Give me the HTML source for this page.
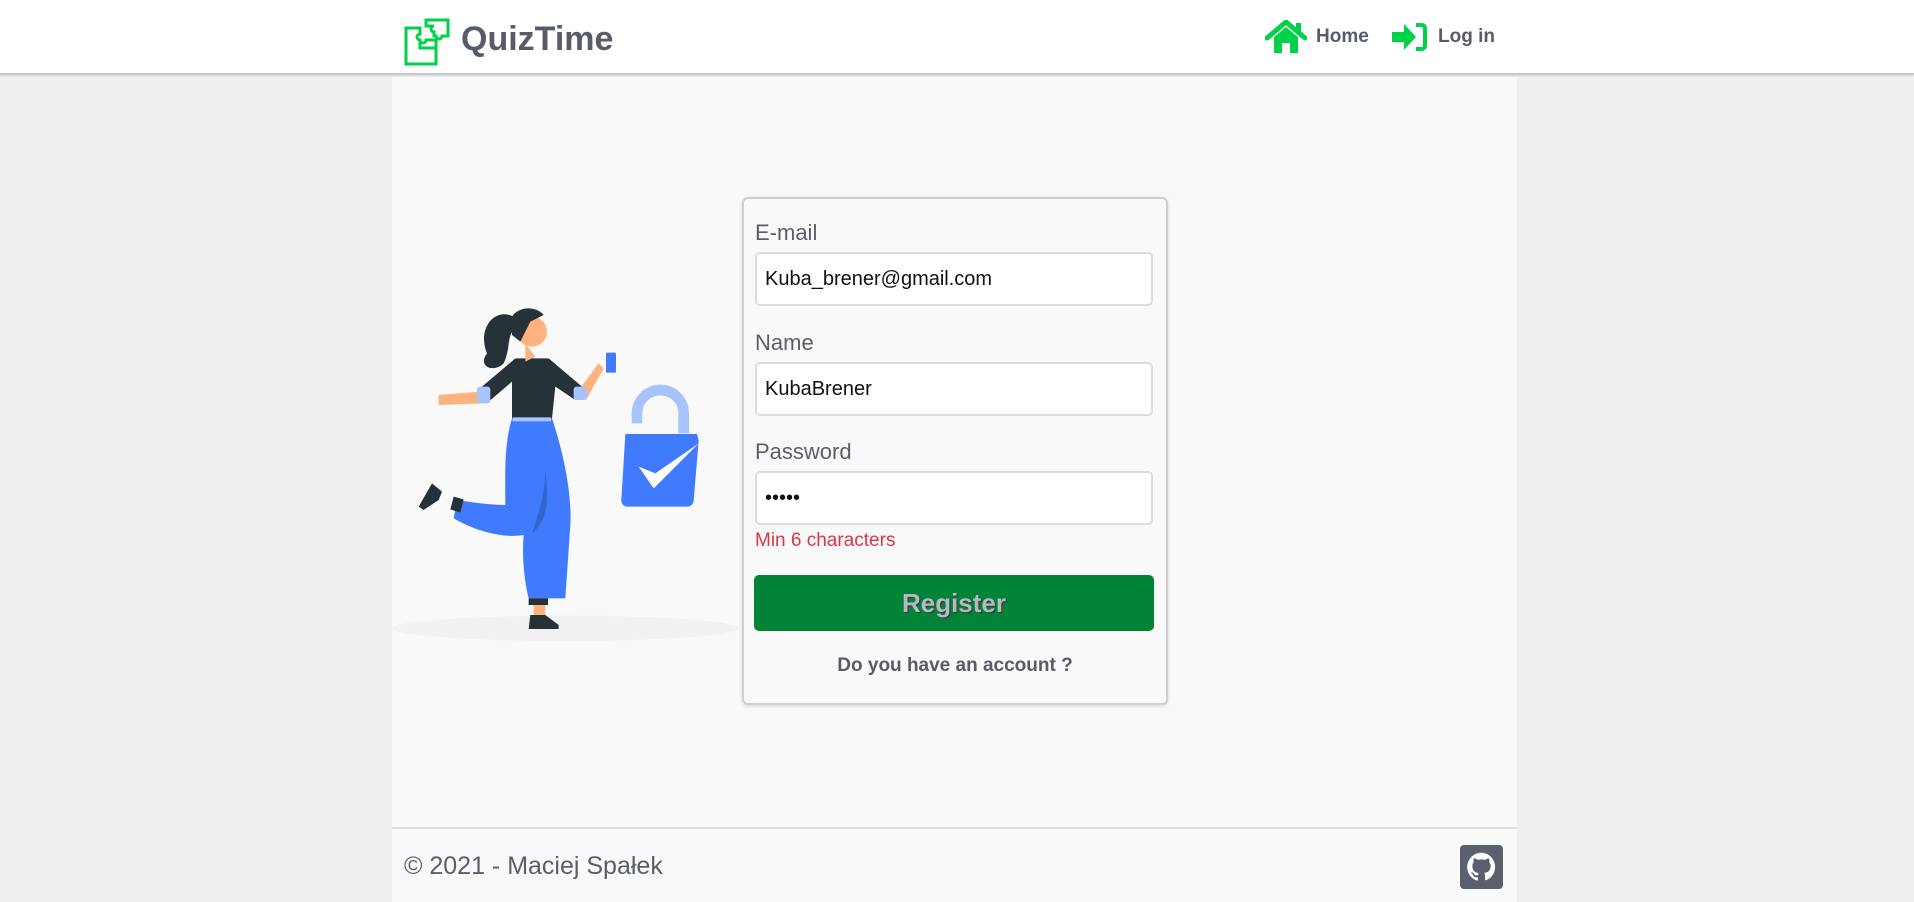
<!DOCTYPE html>
<html><head><meta charset="utf-8"><style>
*{box-sizing:border-box;margin:0;padding:0}
body{width:1914px;height:902px;background:#efefef;font-family:"Liberation Sans",Arial,sans-serif;position:relative;overflow:hidden}
.hdr{position:absolute;left:0;top:0;width:1914px;height:75px;background:#fff;border-bottom:2px solid #c8c8cc;box-shadow:0 1px 2px rgba(0,0,0,.1)}
.main{position:absolute;left:392px;top:77px;width:1125px;height:825px;background:#f9f9f9}
.logo{position:absolute;left:404px;top:16px}
.brand{position:absolute;left:461px;top:20px;font-size:34px;font-weight:bold;color:#575b6a}
.nav{position:absolute;top:26px;font-size:19px;font-weight:bold;color:#575b6a}
.card{position:absolute;left:742px;top:197px;width:426px;height:508px;border:2px solid #d0d0d4;border-radius:6px;background:#f9f9f9;box-shadow:0 1px 3px rgba(0,0,0,.15)}
.lbl{position:absolute;left:755px;font-size:22px;color:#5a5e6c}
.inp{position:absolute;left:755px;width:398px;height:54px;border:2px solid #dcdcdc;border-radius:5px;background:#fff;font-size:20px;color:#111;padding:14px 0 0 8px}
.err{position:absolute;left:755px;top:530px;font-size:19px;color:#dc3545}
.btn{position:absolute;left:754px;top:575px;width:400px;height:56px;background:#018437;border-radius:5px;text-align:center;font-size:26px;font-weight:bold;color:#b6b8c4;line-height:56px;text-shadow:1px 1px 1px #333}
.acc{position:absolute;left:742px;width:426px;top:655px;text-align:center;font-size:19px;font-weight:bold;color:#575b6a}
.fline{position:absolute;left:392px;top:827px;width:1125px;height:2px;background:#dedede}
.foot{position:absolute;left:404px;top:852px;font-size:25px;color:#5a5e6c}
.gh{position:absolute;left:1460px;top:845px;width:43px;height:44px;background:#5b6070;border-radius:4px}
</style></head><body>
<div class="hdr"></div>
<div class="main"></div>
<svg class="logo" width="50" height="50" viewBox="0 0 50 50" fill="none" stroke="#00d04a" stroke-width="3">
<path d="M2 12h14v6a3 3 0 1 0 0 6v8h16v16H2z"/>
<path d="M16 24a3 3 0 1 0 6 0h10v8"/>
<path d="M22 4h22v16h-6a3 3 0 1 1-6 0h-2v-4a3 3 0 1 1 0-6h-8z"/>
</svg>
<div class="brand">QuizTime</div>
<svg style="position:absolute;left:1265px;top:20px" width="42" height="34" viewBox="0 0 42 34"><path d="M2 18L21 2l19 16" stroke="#00d04a" stroke-width="5" fill="none" stroke-linecap="round"/><path d="M9 17l12-10 12 10v16h-8v-10h-8v10H9z" fill="#00d04a"/><rect x="31" y="3" width="5" height="9" fill="#00d04a"/></svg>
<div class="nav" style="left:1316px">Home</div>
<svg style="position:absolute;left:1390px;top:22px" width="38" height="30" viewBox="0 0 38 30"><path d="M2 10h12V2l12 13-12 13v-8H2z" fill="#00d04a"/><path d="M26 3h6a3 3 0 0 1 3 3v18a3 3 0 0 1-3 3h-6" stroke="#00d04a" stroke-width="4" fill="none"/></svg>
<div class="nav" style="left:1438px">Log in</div>

<svg style="position:absolute;left:392px;top:290px" width="350" height="360" viewBox="0 0 1050 1080">
<ellipse cx="520" cy="1015" rx="520" ry="38" fill="#f1f1f1"/>
<path d="M735 400v-30a70 70 0 0 1 140 0v60" stroke="#a6c4fb" stroke-width="32" fill="none"/>
<path d="M700 432h215l5 20-15 180a20 20 0 0 1-20 18H705a18 18 0 0 1-17-20z" fill="#407bff"/>
<path d="M740 530l45 65 135-135-130 90z" fill="#fff"/>
<path d="M140 315l125-10 10 35-135 5z" fill="#ffb27d"/>
<path d="M560 300l60-80 15 15-50 90z" fill="#ffb27d"/>
<rect x="642" y="188" width="30" height="60" rx="4" fill="#407bff"/>
<path d="M270 290l100-85h100l100 85-20 40-60-40-10 95H360l0-110-70 60z" fill="#263238"/>
<path d="M360 385h120c40 120 60 240 55 320l-15 220h-110c-15-60-20-130-15-190-60 10-140-10-210-50l10-55c60 10 110 15 145 15 0-80-5-180 20-260z" fill="#407bff"/>
<path d="M420 730c20-60 40-120 40-190 10 80 10 150-40 190z" fill="#3366cc"/>
<path d="M185 620l30 8-10 40-30-10z" fill="#263238"/>
<path d="M150 605l-30-25-40 70 15 10 45-30z" fill="#263238"/>
<rect x="410" y="925" width="58" height="20" fill="#263238"/>
<path d="M415 975h45l40 30v12h-90z" fill="#263238"/>
<path d="M425 945h35v30h-35z" fill="#ffb27d"/>
<path d="M400 160l30 40-30 15z" fill="#ffb27d"/>
<circle cx="420" cy="125" r="45" fill="#ffb27d"/>
<path d="M360 80a55 45 0 0 1 95-5l-40 20-30 60-25-20z" fill="#263238"/>
<path d="M365 80c-60-30-110 40-80 110-30 40 20 60 50 30 20-40 10-80 30-100z" fill="#263238"/>
<rect x="255" y="290" width="40" height="50" rx="8" fill="#a6c4fb"/>
<rect x="545" y="290" width="40" height="40" rx="8" fill="#a6c4fb"/>
<rect x="362" y="382" width="115" height="12" fill="#a6c4fb"/>
</svg>

<div class="card"></div>
<div class="lbl" style="top:220px">E-mail</div>
<div class="inp" style="top:252px">Kuba_brener@gmail.com</div>
<div class="lbl" style="top:330px">Name</div>
<div class="inp" style="top:362px">KubaBrener</div>
<div class="lbl" style="top:439px">Password</div>
<div class="inp" style="top:471px">•••••</div>
<div class="err">Min 6 characters</div>
<div class="btn">Register</div>
<div class="acc">Do you have an account ?</div>
<div class="fline"></div>
<div class="foot">© 2021 - Maciej Spałek</div>
<div class="gh"><svg width="43" height="44" viewBox="0 0 24 24"><path fill="#fff" d="M12 4a8 8 0 0 0-2.5 15.6c.4 0 .5-.2.5-.4v-1.5c-2.2.5-2.7-1-2.7-1-.4-.9-.9-1.200-.9-1.2-.7-.5.1-.5.1-.5.8.1 1.2.8 1.2.8.7 1.3 1.9.9 2.3.7.1-.5.3-.9.5-1.1-1.8-.2-3.6-.9-3.6-4 0-.9.3-1.6.8-2.1-.1-.2-.4-1 .1-2.1 0 0 .7-.2 2.2.8a7.5 7.5 0 0 1 4 0c1.5-1 2.2-.8 2.2-.8.4 1.1.2 1.9.1 2.1.5.6.8 1.3.8 2.1 0 3.1-1.9 3.7-3.6 3.9.3.3.5.8.5 1.5v2.2c0 .2.1.5.6.4A8 8 0 0 0 12 4z"/></svg></div>
</body></html>
